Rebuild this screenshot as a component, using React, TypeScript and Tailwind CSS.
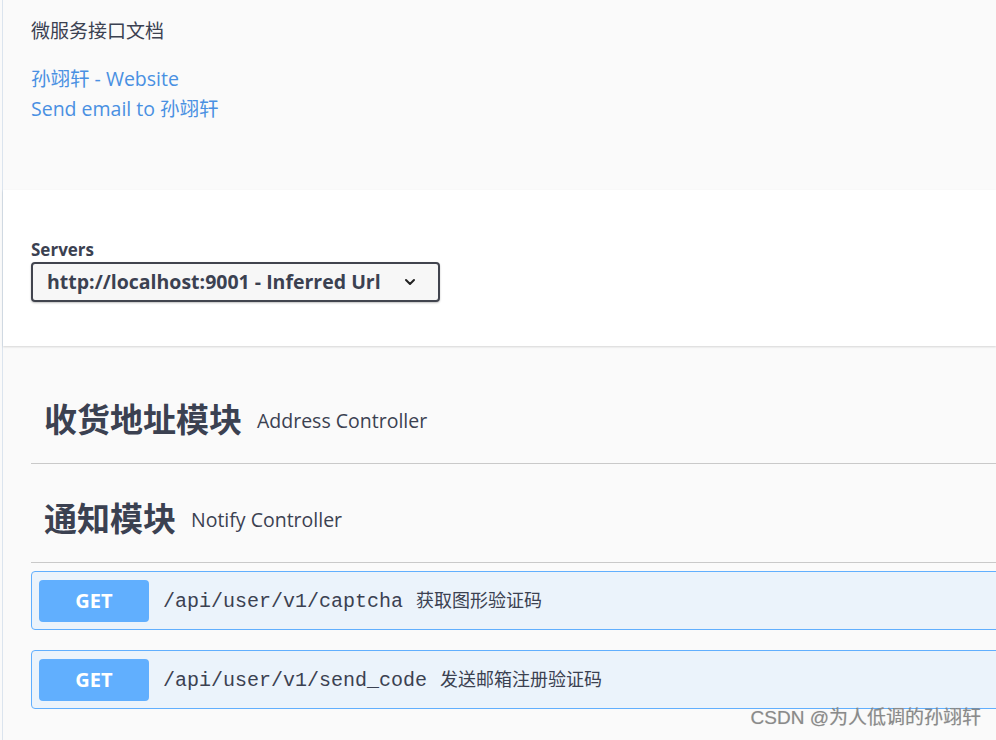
import { ChevronDown } from 'lucide-react'

const sans = "font-['Open_Sans','Noto_Sans_CJK_SC',sans-serif]"
const mono = "font-['Liberation_Mono','Noto_Sans_CJK_SC',monospace]"

const tags = [
  { name: '收货地址模块', desc: 'Address Controller' },
  { name: '通知模块', desc: 'Notify Controller' },
]

const ops = [
  { path: '/api/user/v1/captcha', summary: '获取图形验证码' },
  { path: '/api/user/v1/send_code', summary: '发送邮箱注册验证码' },
]

function Op({ path, summary }: { path: string; summary: string }) {
  return (
    <div className="flex items-center h-[59px] w-[1000px] border border-[#61affe] rounded-[4px] bg-[#ebf3fb] pl-[7px]">
      <span className={`flex items-center justify-center w-[110px] h-[42px] rounded-[4px] bg-[#61affe] text-white text-[20px] font-bold ${sans}`}>
        GET
      </span>
      <span className={`ml-[14px] mt-[2px] text-[20px] text-[#3b4151] ${mono}`}>{path}</span>
      <span className={`ml-[13px] text-[18px] text-[#3b4151] ${sans}`}>{summary}</span>
    </div>
  )
}

export default function App() {
  return (
    <div className={`relative w-[996px] h-[740px] overflow-hidden bg-[#fafafa] pl-[2px] ${sans}`}>
      <div className="h-full border-l border-[#dbe4ee]">
        {/* Info */}
        <section className="h-[190px] px-[28px] pt-[19px]">
          <p className="text-[19px] leading-[24px] text-[#3b4151]">微服务接口文档</p>
          <div className="mt-[21px] flex flex-col text-[19.5px] leading-[30px] text-[#4990e2]">
            <a>孙翊轩 - Website</a>
            <a>Send email to 孙翊轩</a>
          </div>
        </section>

        {/* Servers */}
        <section className="h-[156px] bg-white px-[28px] pt-[50px] shadow-[0_1px_2px_rgba(0,0,0,0.15)]">
          <p className="text-[17px] leading-[20px] font-bold text-[#3b4151]">Servers</p>
          <div className="mt-[2px] flex items-center w-[409px] h-[40px] rounded-[4px] border-2 border-[#41444e] bg-[#f7f7f7] pl-[14px] pr-[20px] shadow-[0_1px_2px_rgba(0,0,0,0.25)]">
            <span className="flex-1 text-[19.5px] font-bold text-[#3b4151]">http://localhost:9001 - Inferred Url</span>
            <ChevronDown className="w-[16px] h-[16px] text-[#222]" strokeWidth={3} />
          </div>
        </section>

        {/* Tags */}
        <section className="pl-[28px] pt-[30px]">
          {tags.map((t, i) => (
            <div
              key={t.name}
              className={`flex items-center gap-[15px] h-[88px] pl-[13px] border-b border-[#c9c9c9] ${i === 0 ? 'mb-[11px]' : ''}`}
            >
              <h3 className="text-[33px] font-bold text-[#3b4151]">{t.name}</h3>
              <span className="text-[19.5px] text-[#3b4151] mt-[2px]">{t.desc}</span>
            </div>
          ))}
          <div className="mt-[8px] flex flex-col gap-[20px]">
            {ops.map((o) => (
              <Op key={o.path} {...o} />
            ))}
          </div>
        </section>
      </div>

      <div className="absolute right-[15px] bottom-[8px] text-[19px] text-[#8a8a8a] [text-shadow:0_0_1px_rgba(0,0,0,0.2)] font-['Liberation_Sans','Noto_Sans_CJK_SC',sans-serif]">
        CSDN @为人低调的孙翊轩
      </div>
    </div>
  )
}
